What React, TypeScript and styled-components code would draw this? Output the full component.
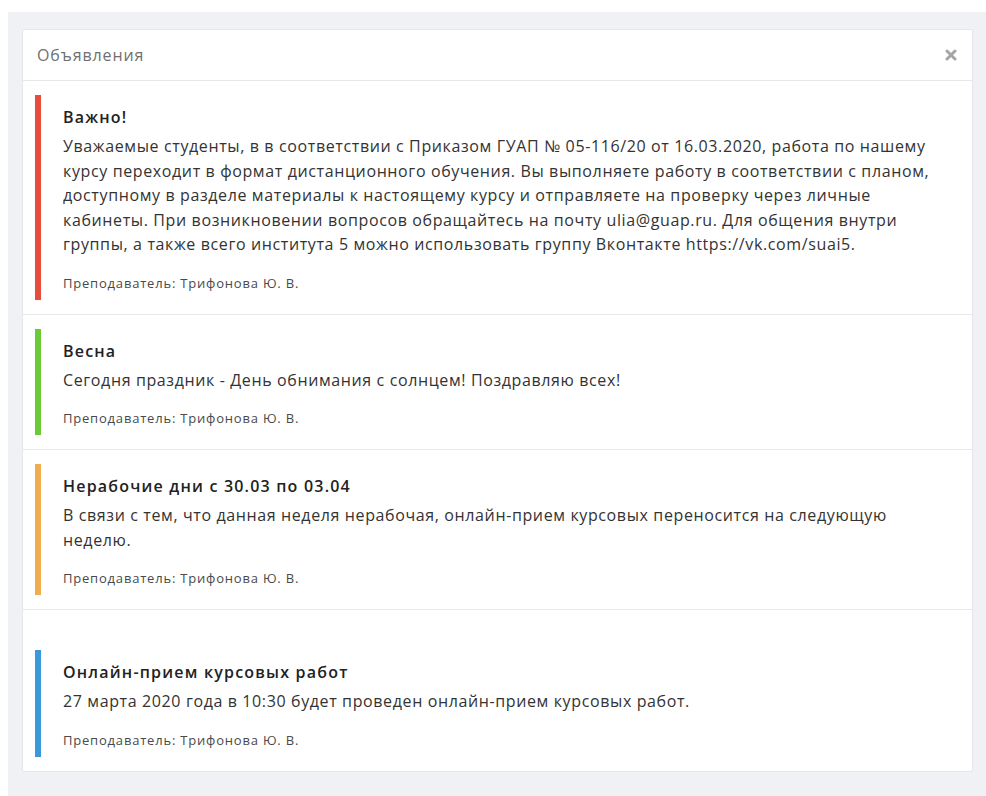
import React from "react";
import styled, { createGlobalStyle } from "styled-components";

const GlobalStyle = createGlobalStyle`
  html, body {
    margin: 0;
    padding: 0;
    background: #ffffff;
  }
  body {
    font-family: "Open Sans", "Noto Sans", sans-serif;
    color: #333333;
  }
`;

const Page = styled.div`
  margin: 12px 0 0 8px;
  min-height: 784px;
  box-sizing: border-box;
  background: #f0f1f5;
  padding: 17px 13px 26px 14px;
`;

const Panel = styled.div`
  background: #ffffff;
  border: 1px solid #e4e6eb;
  border-radius: 2px;
`;

const PanelHeader = styled.div`
  height: 50px;
  display: flex;
  align-items: center;
  justify-content: space-between;
  padding: 0 14px 0 14px;
  border-bottom: 1px solid #e7e8ec;
`;

const PanelTitle = styled.h3`
  margin: 0;
  font-size: 16px;
  font-weight: 400;
  letter-spacing: 0.9px;
  color: #707070;
`;

const CloseButton = styled.button`
  border: none;
  background: none;
  padding: 0;
  width: 14px;
  height: 14px;
  display: flex;
  align-items: center;
  justify-content: center;
  cursor: pointer;
`;

const Notice = styled.div<{ $gap?: number }>`
  padding: ${(p) => 14 + (p.$gap ?? 0)}px 29px 14px 12px;
  & + & {
    border-top: 1px solid #e7e8ec;
  }
`;

const NoticeBody = styled.div<{ $accent: string }>`
  border-left: 6px solid ${(p) => p.$accent};
  padding: 10px 0 8px 22px;
`;

const NoticeTitle = styled.div`
  font-size: 16px;
  line-height: 24px;
  font-weight: 600;
  letter-spacing: 1.2px;
  color: #222222;
  margin-bottom: 5px;
`;

const NoticeText = styled.div`
  font-size: 16px;
  line-height: 24.5px;
  letter-spacing: 0.62px;
  color: #333333;
`;

const NoticeAuthor = styled.div`
  margin-top: 17px;
  font-size: 13px;
  line-height: 18px;
  letter-spacing: 0.8px;
  color: #4a4a4a;
`;

type Item = {
  title: string;
  text: string;
  accent: string;
  gap?: number;
};

const items: Item[] = [
  {
    title: "Важно!",
    accent: "#e84c3d",
    text:
      "Уважаемые студенты, в в соответствии с Приказом ГУАП № 05-116/20 от 16.03.2020, работа по нашему курсу переходит в формат дистанционного обучения. Вы выполняете работу в соответствии с планом, доступному в разделе материалы к настоящему курсу и отправляете на проверку через личные кабинеты. При возникновении вопросов обращайтесь на почту ulia@guap.ru. Для общения внутри группы, а также всего института 5 можно использовать группу Вконтакте https://vk.com/suai5.",
  },
  {
    title: "Весна",
    accent: "#6bcb36",
    text: "Сегодня праздник - День обнимания с солнцем! Поздравляю всех!",
  },
  {
    title: "Нерабочие дни с 30.03 по 03.04",
    accent: "#f0ad4e",
    text:
      "В связи с тем, что данная неделя нерабочая, онлайн-прием курсовых переносится на следующую неделю.",
  },
  {
    title: "Онлайн-прием курсовых работ",
    accent: "#3a9ad9",
    gap: 26,
    text: "27 марта 2020 года в 10:30 будет проведен онлайн-прием курсовых работ.",
  },
];

const CloseIcon = () => (
  <svg width="12" height="12" viewBox="0 0 12 12">
    <path
      d="M2 2 L10 10 M10 2 L2 10"
      stroke="#a5a5a5"
      strokeWidth="3"
      strokeLinecap="round"
    />
  </svg>
);

export default function App() {
  return (
    <>
      <GlobalStyle />
      <Page>
        <Panel>
          <PanelHeader>
            <PanelTitle>Объявления</PanelTitle>
            <CloseButton aria-label="Закрыть">
              <CloseIcon />
            </CloseButton>
          </PanelHeader>
          {items.map((item) => (
            <Notice key={item.title} $gap={item.gap}>
              <NoticeBody $accent={item.accent}>
                <NoticeTitle>{item.title}</NoticeTitle>
                <NoticeText>{item.text}</NoticeText>
                <NoticeAuthor>Преподаватель: Трифонова Ю. В.</NoticeAuthor>
              </NoticeBody>
            </Notice>
          ))}
        </Panel>
      </Page>
    </>
  );
}
